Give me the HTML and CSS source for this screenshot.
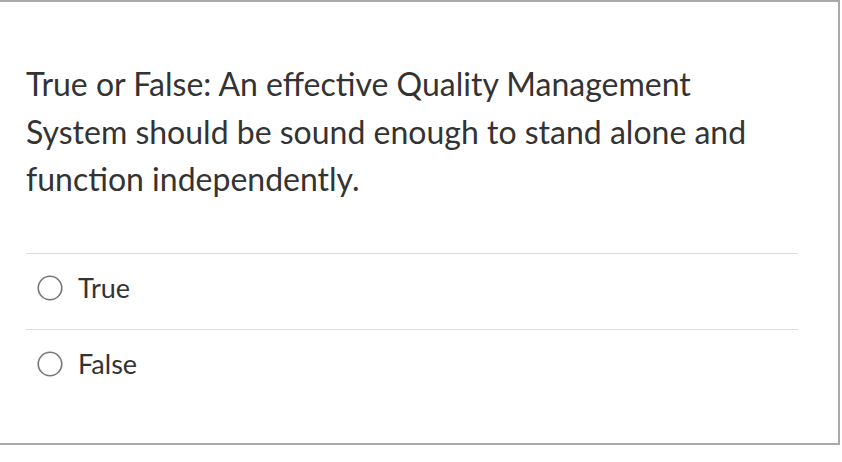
FILE: index.html
```html
<!DOCTYPE html>
<html>
<head>
<meta charset="utf-8">
<link rel="stylesheet" href="styles.css">
</head>
<body>
<div class="card">
  <div class="question">True or False: An effective Quality Management System should be sound enough to stand alone and function independently.</div>
  <div class="answers">
    <label class="answer">
      <svg class="radio" width="26" height="26" viewBox="0 0 26 26"><circle cx="13" cy="13" r="11.75" fill="#fff" stroke="#777" stroke-width="1.6"/></svg>
      <span class="label">True</span>
    </label>
    <label class="answer">
      <svg class="radio" width="26" height="26" viewBox="0 0 26 26"><circle cx="13" cy="13" r="11.75" fill="#fff" stroke="#777" stroke-width="1.6"/></svg>
      <span class="label">False</span>
    </label>
  </div>
</div>
</body>
</html>
```
FILE: styles.css
```css
html, body {
  margin: 0;
  padding: 0;
  background: #fff;
  overflow: hidden;
}
.card {
  box-sizing: border-box;
  width: 842px;
  height: 445px;
  margin-left: -2px;
  border: 2px solid #a9a9a9;
  padding: 58px 40px 0 26px;
  font-family: Lato, "Noto Sans", sans-serif;
  color: #333;
}
.question {
  font-size: 32px;
  line-height: 47.6px;
  padding-bottom: 50px;
}
.answers {
  display: flex;
  flex-direction: column;
}
.answer {
  box-sizing: border-box;
  display: flex;
  align-items: center;
  gap: 15px;
  height: 76px;
  padding-left: 11px;
  padding-bottom: 7px;
  border-top: 1px solid #dcdcdc;
  font-size: 27px;
}
.radio {
  display: block;
  flex: none;
}
```
